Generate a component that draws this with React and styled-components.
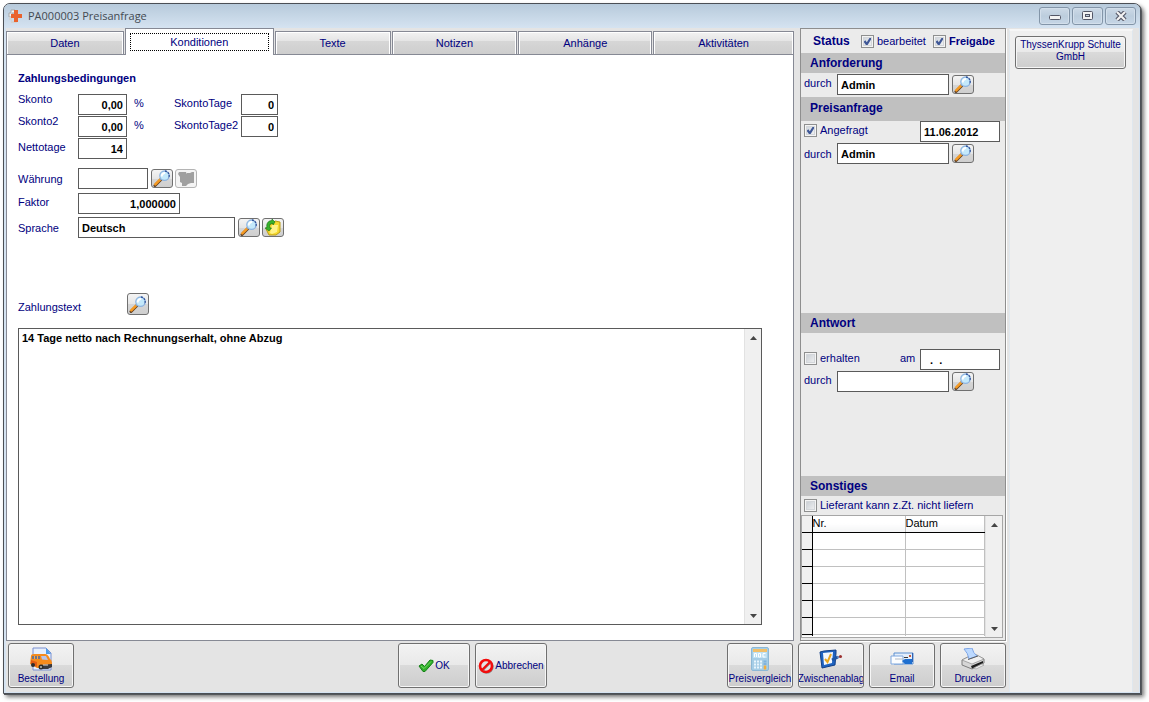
import { useId } from "react";
import styled, { createGlobalStyle, css } from "styled-components";

const GlobalStyle = createGlobalStyle`
  *, *::before, *::after {
    box-sizing: border-box;
  }

  body {
    margin: 0;
    background: #ffffff;
    color: #000080;
    font-family: "Liberation Sans", Arial, sans-serif;
    font-size: 11px;
    line-height: 12px;
  }

  button, input, textarea {
    font: inherit;
    color: inherit;
    margin: 0;
  }
`;

/* ---------- window frame ---------- */

const Page = styled.div`
  display: flex;
  min-height: 100vh;
  padding: 3px 8px 8px 3px;
`;

const Window = styled.div`
  flex: 1;
  display: flex;
  flex-direction: column;
  min-width: 0;
  border: 1px solid #4b4f55;
  border-radius: 7px 7px 0 0;
  background: #d5e3f1;
  box-shadow: 1px 1px 0 #55585c, 3px 3px 4px rgba(0, 0, 0, 0.55);
  overflow: hidden;
`;

const TitleBar = styled.header`
  display: flex;
  align-items: center;
  height: 24px;
  padding: 0 4px;
  gap: 4px;
  background: linear-gradient(#b7cadb, #d5e3f1);
`;

const Title = styled.h1`
  flex: 1;
  margin: 0;
  color: #444a52;
  font-family: "Open Sans", "Noto Sans", sans-serif;
  font-size: 11px;
  font-weight: 400;
  line-height: 16px;
`;

const Captions = styled.div`
  display: flex;
  gap: 2px;
`;

const CaptionButton = styled.button`
  display: grid;
  place-items: center;
  width: 31px;
  height: 18px;
  padding: 0;
  border: 1px solid #8395a8;
  border-radius: 3px;
  background: linear-gradient(#cddae7, #bccddd 50%, #c6d6e6);
  box-shadow: inset 0 0 0 1px #d3dfeb;
`;

const Body = styled.div`
  flex: 1;
  display: flex;
  margin: 0 1px 1px 2px;
  padding-right: 6px;
  background: #e4e4e4;
`;

const Workspace = styled.div`
  flex: 1;
  display: flex;
  flex-direction: column;
  min-width: 0;
`;

const Columns = styled.div`
  flex: 1;
  display: flex;
  gap: 6px;
  padding-right: 3px;
`;

const MainColumn = styled.div`
  flex: 1;
  display: flex;
  flex-direction: column;
  min-width: 0;
`;

/* ---------- tabs ---------- */

const TabList = styled.div`
  display: flex;
  align-items: flex-end;
  gap: 1px;
  height: 26px;
`;

const Tab = styled.button`
  flex: ${({ $grow }) => $grow} 1 0;
  height: 23px;
  padding: 0;
  border: 1px solid #868994;
  border-bottom: 0;
  background: linear-gradient(#f2f2f2, #e4e4e4 42%, #d6d6d6 43%, #cecece);
  box-shadow: inset 1px 1px 0 #ffffff, inset -1px 0 0 #ffffff;

  ${({ $active }) =>
    $active &&
    css`
      height: 27px;
      margin-bottom: -1px;
      padding: 3px 4px 4px;
      background: #ffffff;
      position: relative;
    `}
`;

const Focus = styled.span`
  display: block;
  height: 18px;
  line-height: 16px;
  border: 1px dotted #000000;
`;

const Panel = styled.main`
  flex: 1;
  display: flex;
  flex-direction: column;
  padding: 16px 31px 15px 11px;
  border: 1px solid #868994;
  background: #ffffff;
`;

/* ---------- form parts ---------- */

const PanelTitle = styled.h2`
  margin: 0 0 9px;
  font-size: 11px;
  font-weight: 700;
  line-height: 14px;
`;

const Row = styled.div`
  display: flex;
  align-items: flex-start;
  min-height: 22px;
  margin-top: ${({ $gap = 0 }) => $gap}px;
`;

const Label = styled.label`
  flex: none;
  width: ${({ $width }) => ($width ? `${$width}px` : "auto")};
  line-height: ${({ $line = 22 }) => $line}px;
`;

const Unit = styled.span`
  width: 47px;
  padding-left: 7px;
  line-height: 18px;
`;

const TextField = styled.input`
  flex: none;
  width: ${({ $width }) => $width}px;
  height: 21px;
  padding: 0 3px;
  border: 1px solid #5a5a5a;
  border-radius: 0;
  background: #ffffff;
  color: #000000;
  font-weight: 700;
  text-align: ${({ $align = "left" }) => $align};
  outline: none;
`;

const IconButton = styled.button`
  flex: none;
  display: grid;
  place-items: center;
  width: 22px;
  height: ${({ $tall }) => ($tall ? 22 : 19)}px;
  margin: 1px 0 0 ${({ $gap = 3 }) => $gap}px;
  padding: 0;
  border: 1px solid #707070;
  border-radius: 3px;
  background: linear-gradient(#f4f4f4, #e6e6e6 50%, #d6d6d6 51%, #cfcfcf);

  &:disabled {
    border-color: #b4b4b4;
    background: #f4f4f4;
  }
`;

const Memo = styled.div`
  flex: 1;
  display: flex;
  min-height: 160px;
  margin-top: 6px;
  border: 1px solid #5a5a5a;
`;

const MemoText = styled.textarea`
  flex: 1;
  padding: 3px;
  border: 0;
  resize: none;
  overflow: hidden;
  background: #ffffff;
  color: #000000;
  font-weight: 700;
  outline: none;
`;

const ScrollTrack = styled.div`
  flex: none;
  display: flex;
  flex-direction: column;
  justify-content: space-between;
  width: 17px;
  border-left: 1px solid #e2e2e2;
  background: #f0f0f0;
`;

const ScrollButton = styled.button`
  display: grid;
  place-items: center;
  height: 17px;
  padding: 0;
  border: 0;
  background: none;
`;

/* ---------- status column ---------- */

const Side = styled.aside`
  flex: none;
  display: flex;
  flex-direction: column;
  width: 206px;
  border: 1px solid #8e8e8e;
  background: #ebebeb;
  box-shadow: 1px 1px 0 #ffffff;
`;

const StatusBar = styled.div`
  display: flex;
  align-items: center;
  height: 24px;
  padding-left: 12px;
  gap: 7px;
`;

const StatusTitle = styled.strong`
  width: 41px;
  font-size: 12px;
`;

const Section = styled.section`
  display: flex;
  flex-direction: column;
  min-height: ${({ $height = 0 }) => $height}px;
  flex: ${({ $fill }) => ($fill ? "1" : "none")};
`;

const SectionTitle = styled.h2`
  margin: 0;
  height: ${({ $tall }) => ($tall ? 24 : 20)}px;
  padding-left: 9px;
  background: #c0c0c0;
  font-size: 12px;
  font-weight: 700;
  line-height: ${({ $tall }) => ($tall ? 22 : 20)}px;
`;

const SideRow = styled.div`
  display: flex;
  align-items: flex-start;
  min-height: ${({ $height = 22 }) => $height}px;
  margin-top: ${({ $gap = 0 }) => $gap}px;
  padding: 0 5px 0 3px;
`;

const Spacer = styled.span`
  flex: 1;
`;

const CheckLabel = styled.label`
  display: inline-flex;
  align-items: center;
  gap: 3px;
  height: 18px;
  font-weight: ${({ $bold }) => ($bold ? 700 : 400)};
`;

const CheckBox = styled.input`
  appearance: none;
  width: 13px;
  height: 13px;
  border: 1px solid #8e8f8f;
  background: linear-gradient(135deg, #c2c8cf, #f6f6f6);
  box-shadow: inset 0 0 0 1px #f4f4f4, inset 0 0 0 2px #d3d6da;

  &:checked {
    background:
      url("data:image/svg+xml,%3Csvg xmlns='http://www.w3.org/2000/svg' viewBox='0 0 11 11'%3E%3Cpath d='M2.500 5l2.300 3.300 3.900-6.300' fill='none' stroke='%233f5796' stroke-width='2.200'/%3E%3C/svg%3E"),
      linear-gradient(135deg, #c9d0d8, #f6f6f6);
  }
`;

const Grid = styled.div`
  flex: 1 1 0;
  display: flex;
  margin: 0 2px 2px 0;
  border: 1px solid #a6a6a6;
  background: #ffffff;
  overflow: hidden;
`;

const TableBox = styled.div`
  flex: 1;
  height: 120px;
  overflow: hidden;
`;

const Table = styled.table`
  width: 100%;
  border-collapse: collapse;
  table-layout: fixed;
  color: #000000;

  th, td {
    height: 17px;
    padding: 0;
    border-right: 1px solid #c0c0c0;
    border-bottom: 1px solid #c0c0c0;
  }

  thead th {
    height: 16px;
    border-bottom: 1px solid #000000;
    background: linear-gradient(#ffffff 45%, #f3f4f5);
    font-weight: 400;
    line-height: 15px;
    text-align: left;
  }

  th:first-child {
    width: 10px;
    border-right: 1px solid #000000;
    border-bottom: 1px solid #000000;
    background: #f0f0f0;
  }

  thead th:nth-child(2) {
    width: 93px;
  }
`;

/* ---------- suppliers and toolbar ---------- */

const Suppliers = styled.nav`
  flex: none;
  width: 124px;
  padding: 5px 5px 0 5px;
  border: 1px solid #dfe7ee;
  border-top: 2px solid #f6f6f6;
  border-bottom: 0;
  background: #efefef;
  margin-top: 1px;
`;

const raised = css`
  border: 1px solid #707070;
  border-radius: 3px;
  background: linear-gradient(#f3f3f3, #e9e9e9 48%, #dadada 49%, #cdcdcd);
  box-shadow: inset 0 0 0 1px #f6f6f6;
`;

const SupplierButton = styled.button`
  ${raised}
  width: 111px;
  height: 33px;
  padding: 0 2px 3px;
  font-size: 10px;
`;

const Toolbar = styled.footer`
  display: flex;
  align-items: flex-start;
  height: 51px;
  padding: 2px 3px 0 2px;
`;

const ToolGroup = styled.div`
  display: flex;
  gap: 5px;
  flex: ${({ $basis }) => ($basis ? `0 1 ${$basis}px` : "none")};
  margin-left: ${({ $end }) => ($end ? "auto" : 0)};
`;

const ToolButton = styled.button`
  ${raised}
  display: flex;
  flex-direction: ${({ $wide }) => ($wide ? "row" : "column")};
  align-items: center;
  justify-content: center;
  gap: 1px;
  width: ${({ $wide }) => ($wide ? 72 : 66)}px;
  height: 45px;
  padding: 0;
  overflow: hidden;
  font-size: 10px;
  white-space: nowrap;
`;

const ToolIcon = styled.span`
  display: grid;
  place-items: center;
  height: 26px;
`;

/* ---------- icons ---------- */

const LogoIcon = () => (
  <svg width="16" height="16" viewBox="0 0 16 16">
    <path d="M3 2h4v3H4v4H1V5h2z" fill="#f4f4f4" stroke="#a9a9a9" />
    <path d="M1 9h3v4h5v2H3v-3H1z" fill="#d2d2d2" />
    <path d="M6 2h4v4h4v4h-4v4H6v-4H3V6h3z" fill="#e9622c" />
  </svg>
);

const SearchIcon = () => (
  <svg width="18" height="17" viewBox="0 0 18 17">
    <path d="M2 15.500l5.500-5.500" stroke="#5d3d22" strokeWidth="3" strokeLinecap="round" />
    <path d="M2.300 14.300l5-5" stroke="#f59a23" strokeWidth="2.600" strokeLinecap="round" />
    <path d="M7 9.500l2-2" stroke="#8b98a8" strokeWidth="2" />
    <circle cx="11.500" cy="5.700" r="4.700" fill="#c4e9fb" stroke="#8db4e0" strokeWidth="1.300" />
    <path d="M12 1a4.700 4.700 0 0 1 3.600 7" fill="none" stroke="#34549b" strokeWidth="1.300" strokeDasharray="2 1" />
    <path d="M8.700 6.500a3.200 3.200 0 0 1 3.500-3.500" fill="none" stroke="#ffffff" strokeWidth="2" />
  </svg>
);

const DisabledFolderIcon = () => (
  <svg width="18" height="17" viewBox="0 0 18 17">
    <path d="M2 2h7l1 1h3l2-1h2v11h-3l-3 1-2 2H5v-3l-2-1V7L1 4z" fill="#a0a0a0" />
    <path d="M9 3l3-1v1" fill="none" stroke="#f4f4f4" />
  </svg>
);

const FolderIcon = () => (
  <svg width="18" height="17" viewBox="0 0 18 17">
    <path d="M5 6l4-2 2-2 5 1v10l-4 3H5L2 10z" fill="#f6d92e" stroke="#b99b17" />
    <path d="M8 6h6l-1 7-5 2-2-1z" fill="#fff28a" />
    <path d="M9 4.500C6 4.500 5 6 6 9l1.500 0L5 12 1 9l2-.5C2 5 4 1.500 8 1.500V0l3 3-2 3z" fill="#38b22c" stroke="#16711a" strokeWidth="0.600" />
  </svg>
);

const VanIcon = () => (
  <svg width="24" height="24" viewBox="0 0 24 24">
    <path d="M4 1h13l5 5v17H4z" fill="#e7effc" stroke="#7a90d0" />
    <path d="M17 1v6h5z" fill="#4d9be8" />
    <path d="M2 9q0-2 3-2h11q3 0 5 5 2 1 2 4v3l-3 2H8L1 17z" fill="#f68b1c" />
    <path d="M2 13l6 2v5l-6-3z" fill="#e25c14" />
    <path d="M3 9h8v3H3z" fill="#6f7286" />
    <path d="M5.500 9v3M8.500 9v3" stroke="#f6a94c" />
    <path d="M12 9h5l2 4-6-.5z" fill="#b9c5e8" />
    <path d="M11 18l12-1v3l-4 2h-7z" fill="#3a3a3f" />
    <path d="M14 18h5" stroke="#dcdcdc" />
    <circle cx="4" cy="18" r="2" fill="#2d2d2d" />
    <circle cx="12" cy="20" r="2.500" fill="#2d2d2d" />
    <circle cx="12" cy="20" r="1" fill="#bcbcbc" />
  </svg>
);

const OkIcon = () => (
  <svg width="16" height="14" viewBox="0 0 16 14">
    <path d="M1 7l3-2 2.500 2.500L12 1l3 .5v2L7 12.500H5z" fill="#2fae2b" stroke="#148016" />
    <path d="M3 7l3 2.500L13 2.500" fill="none" stroke="#74dc62" />
  </svg>
);

const CancelIcon = () => (
  <svg width="16" height="16" viewBox="0 0 16 16">
    <circle cx="8.700" cy="8.700" r="5.800" fill="none" stroke="#8d8d8d" strokeWidth="2.500" />
    <circle cx="8" cy="8" r="6" fill="#e4e4e4" stroke="#f30c0c" strokeWidth="2.600" />
    <path d="M5 12l7-7" stroke="#8d8d8d" strokeWidth="2" />
    <path d="M4 12l8-8" stroke="#f30c0c" strokeWidth="2.200" />
  </svg>
);

const CalculatorIcon = () => (
  <svg width="18" height="24" viewBox="0 0 18 24">
    <rect x="0.500" y="0.500" width="17" height="23" rx="1.500" fill="#a5cde6" stroke="#8cb8d6" />
    <rect x="2" y="2" width="14" height="3" fill="#f1bf6a" />
    <rect x="2" y="5" width="14" height="6" fill="#bfe1f3" />
    <path d="M3.500 10V6.500h2V10M7.500 6.500h2V10h-2zM12 6.500h2.500M12 6.500V10h2.500" fill="none" stroke="#ffffff" />
    <path d="M3 14.500h8M3 17.500h8M3 20.500h8" stroke="#e8f5fc" strokeWidth="2" strokeDasharray="2 1" />
    <path d="M12.500 14.500h3M12.500 17h3" stroke="#7fb2dc" strokeWidth="2" />
    <path d="M14 18.500v4" stroke="#f2ad3d" strokeWidth="2.500" />
  </svg>
);

const ClipboardIcon = () => (
  <svg width="24" height="20" viewBox="0 0 24 20">
    <path d="M1 3l4-1L17 1v3l-1 12-13 3z" fill="#1f63c0" stroke="#123f86" />
    <path d="M4 4l10-1-1 11-8 2z" fill="#f3f8ff" />
    <path d="M6 10l2.500 3L12 5" fill="none" stroke="#e9a71f" strokeWidth="2" />
    <path d="M13 11l6-3" stroke="#1d56a5" strokeWidth="3" />
    <path d="M18 8.500l3-1" stroke="#5b7fb4" strokeWidth="1.500" />
    <circle cx="21.500" cy="7.500" r="1.500" fill="#9b2f2f" />
  </svg>
);

const EmailIcon = () => (
  <svg width="24" height="14" viewBox="0 0 24 14">
    <path d="M4 1h19v11H4z" fill="#e3eefb" stroke="#5a8ed0" />
    <path d="M1 4h12v8H1z" fill="#fbfdff" stroke="#7da6dd" />
    <path d="M5 7h8" stroke="#b0b9c6" />
    <path d="M12 9l3-2h7v5h-7z" fill="#1e6fd0" />
    <path d="M14 5.500h4" stroke="#3a3a3a" />
    <path d="M19 3h2v2h-2z" fill="#c75a3a" />
    <path d="M22.500 1v9" stroke="#2f63b4" />
  </svg>
);

const PrinterIcon = () => (
  <svg width="24" height="22" viewBox="0 0 24 22">
    <path d="M1 12l6-3 8-2 8 4v4l-12 6-10-4z" fill="#d6d6d6" stroke="#7d7d7d" />
    <path d="M1 12l6-3 9-2 7 4-12 5z" fill="#f0f0f0" stroke="#8b8b8b" strokeWidth="0.700" />
    <path d="M3 1l8-1q1 5 5 8l-8 3Q7 5 3 1z" fill="#bcd9ff" stroke="#7ca4e6" />
    <path d="M10 18l12-5v2l-11 5.500z" fill="#1d1d1d" />
    <path d="M13 20l8-4 2 1-8 4z" fill="#fafafa" stroke="#8b8b8b" strokeWidth="0.600" />
    <path d="M7 11.500l10-3.500" stroke="#5c5c5c" />
  </svg>
);

const MinimizeIcon = () => (
  <svg width="12" height="10" viewBox="0 0 12 10">
    <rect x="0.500" y="4.500" width="11" height="4" rx="1" fill="#f3f3f3" stroke="#535666" />
  </svg>
);

const MaximizeIcon = () => (
  <svg width="12" height="10" viewBox="0 0 12 10">
    <rect x="0.500" y="0.500" width="10" height="8" rx="1" fill="#f3f3f3" stroke="#535666" />
    <rect x="3.500" y="3.500" width="4" height="2" fill="#c6d4e2" stroke="#535666" />
  </svg>
);

const CloseIcon = () => (
  <svg width="12" height="10" viewBox="0 0 12 10">
    <path d="M2 1l8 8M10 1l-8 8" stroke="#535666" strokeWidth="4.400" />
    <path d="M2 1l8 8M10 1l-8 8" stroke="#f3f3f3" strokeWidth="2.200" />
  </svg>
);

/* ---------- shared components ---------- */

const Arrow = ({ down }) => (
  <svg width="7" height="4" viewBox="0 0 7 4">
    <path d={down ? "M0 0h7L3.500 4z" : "M0 4h7L3.500 0z"} fill="#454545" />
  </svg>
);

const Scrollbar = () => (
  <ScrollTrack>
    <ScrollButton aria-label="Nach oben">
      <Arrow />
    </ScrollButton>
    <ScrollButton aria-label="Nach unten">
      <Arrow down />
    </ScrollButton>
  </ScrollTrack>
);

const Field = ({ label, labelWidth, line, children, ...input }) => {
  const id = useId();

  return (
    <>
      <Label htmlFor={id} $width={labelWidth} $line={line}>
        {label}
      </Label>
      <TextField id={id} {...input} />
      {children}
    </>
  );
};

const Check = ({ label, bold, checked }) => (
  <CheckLabel $bold={bold}>
    <CheckBox type="checkbox" defaultChecked={checked} />
    {label}
  </CheckLabel>
);

const Search = (props) => (
  <IconButton aria-label="Suchen" {...props}>
    <SearchIcon />
  </IconButton>
);

const Tool = ({ icon, label, wide }) => (
  <ToolButton $wide={wide}>
    <ToolIcon>{icon}</ToolIcon>
    <span>{label}</span>
  </ToolButton>
);

const TABS = [
  { label: "Daten", grow: 116 },
  { label: "Konditionen", grow: 139, active: true },
  { label: "Texte", grow: 114 },
  { label: "Notizen", grow: 124 },
  { label: "Anhänge", grow: 132 },
  { label: "Aktivitäten", grow: 139 },
];

const ConditionsPanel = () => (
  <Panel>
    <PanelTitle>Zahlungsbedingungen</PanelTitle>
    <Row>
      <Field label="Skonto" labelWidth={60} line={10} $width={49} $align="right" defaultValue="0,00" />
      <Unit>%</Unit>
      <Field label="SkontoTage" labelWidth={67} line={18} $width={37} $align="right" defaultValue="0" />
    </Row>
    <Row>
      <Field label="Skonto2" labelWidth={60} line={10} $width={49} $align="right" defaultValue="0,00" />
      <Unit>%</Unit>
      <Field label="SkontoTage2" labelWidth={67} line={18} $width={37} $align="right" defaultValue="0" />
    </Row>
    <Row>
      <Field label="Nettotage" labelWidth={60} line={18} $width={49} $align="right" defaultValue="14" />
    </Row>
    <Row $gap={8}>
      <Field label="Währung" labelWidth={60} $width={70} />
      <Search />
      <IconButton $gap={2} disabled aria-label="Währung öffnen">
        <DisabledFolderIcon />
      </IconButton>
    </Row>
    <Row $gap={3}>
      <Field label="Faktor" labelWidth={60} line={18} $width={102} $align="right" defaultValue="1,000000" />
    </Row>
    <Row $gap={2}>
      <Field label="Sprache" labelWidth={60} $width={157} defaultValue="Deutsch" />
      <Search />
      <IconButton $gap={2} aria-label="Sprache öffnen">
        <FolderIcon />
      </IconButton>
    </Row>
    <Row $gap={53}>
      <Label htmlFor="zahlungstext" $width={106} $line={30}>
        Zahlungstext
      </Label>
      <Search $tall />
    </Row>
    <Memo>
      <MemoText id="zahlungstext" defaultValue="14 Tage netto nach Rechnungserhalt, ohne Abzug" />
      <Scrollbar />
    </Memo>
  </Panel>
);

const StatusColumn = () => (
  <Side>
    <StatusBar>
      <StatusTitle>Status</StatusTitle>
      <Check label="bearbeitet" checked />
      <Check label="Freigabe" bold checked />
    </StatusBar>
    <Section $height={44}>
      <SectionTitle>Anforderung</SectionTitle>
      <SideRow $gap={1}>
        <Field label="durch" labelWidth={33} line={18} $width={112} defaultValue="Admin" />
        <Search />
      </SideRow>
    </Section>
    <Section $height={216}>
      <SectionTitle $tall>Preisanfrage</SectionTitle>
      <SideRow>
        <Check label="Angefragt" checked />
        <Spacer />
        <TextField $width={80} aria-label="Angefragt am" defaultValue="11.06.2012" />
      </SideRow>
      <SideRow>
        <Field label="durch" labelWidth={33} $width={112} defaultValue="Admin" />
        <Search />
      </SideRow>
    </Section>
    <Section $height={163}>
      <SectionTitle>Antwort</SectionTitle>
      <SideRow $gap={16}>
        <Check label="erhalten" />
        <Spacer />
        <Field label="am" labelWidth={20} line={18} $width={80} defaultValue="  .  ." />
      </SideRow>
      <SideRow>
        <Field label="durch" labelWidth={33} line={18} $width={112} />
        <Search />
      </SideRow>
    </Section>
    <Section $fill>
      <SectionTitle>Sonstiges</SectionTitle>
      <SideRow $height={19}>
        <Check label="Lieferant kann z.Zt. nicht liefern" />
      </SideRow>
      <Grid>
        <TableBox>
          <Table>
            <thead>
              <tr>
                <th aria-label="Zeile" />
                <th>Nr.</th>
                <th>Datum</th>
              </tr>
            </thead>
            <tbody>
              {[1, 2, 3, 4, 5, 6, 7].map((row) => (
                <tr key={row}>
                  <th />
                  <td />
                  <td />
                </tr>
              ))}
            </tbody>
          </Table>
        </TableBox>
        <Scrollbar />
      </Grid>
    </Section>
  </Side>
);

const App = () => (
  <Page>
    <GlobalStyle />
    <Window>
      <TitleBar>
        <LogoIcon />
        <Title>PA000003 Preisanfrage</Title>
        <Captions>
          <CaptionButton aria-label="Minimieren">
            <MinimizeIcon />
          </CaptionButton>
          <CaptionButton aria-label="Maximieren">
            <MaximizeIcon />
          </CaptionButton>
          <CaptionButton aria-label="Schließen">
            <CloseIcon />
          </CaptionButton>
        </Captions>
      </TitleBar>
      <Body>
        <Workspace>
          <Columns>
            <MainColumn>
              <TabList role="tablist">
                {TABS.map(({ label, grow, active }) => (
                  <Tab key={label} role="tab" aria-selected={!!active} $grow={grow} $active={active}>
                    {active ? <Focus>{label}</Focus> : label}
                  </Tab>
                ))}
              </TabList>
              <ConditionsPanel />
            </MainColumn>
            <StatusColumn />
          </Columns>
          <Toolbar>
            <ToolGroup $basis={390}>
              <Tool icon={<VanIcon />} label="Bestellung" />
            </ToolGroup>
            <ToolGroup>
              <Tool icon={<OkIcon />} label="OK" wide />
              <Tool icon={<CancelIcon />} label="Abbrechen" wide />
            </ToolGroup>
            <ToolGroup $end>
              <Tool icon={<CalculatorIcon />} label="Preisvergleich" />
              <Tool icon={<ClipboardIcon />} label="Zwischenablag" />
              <Tool icon={<EmailIcon />} label="Email" />
              <Tool icon={<PrinterIcon />} label="Drucken" />
            </ToolGroup>
          </Toolbar>
        </Workspace>
        <Suppliers>
          <SupplierButton>ThyssenKrupp Schulte GmbH</SupplierButton>
        </Suppliers>
      </Body>
    </Window>
  </Page>
);

export default App;
